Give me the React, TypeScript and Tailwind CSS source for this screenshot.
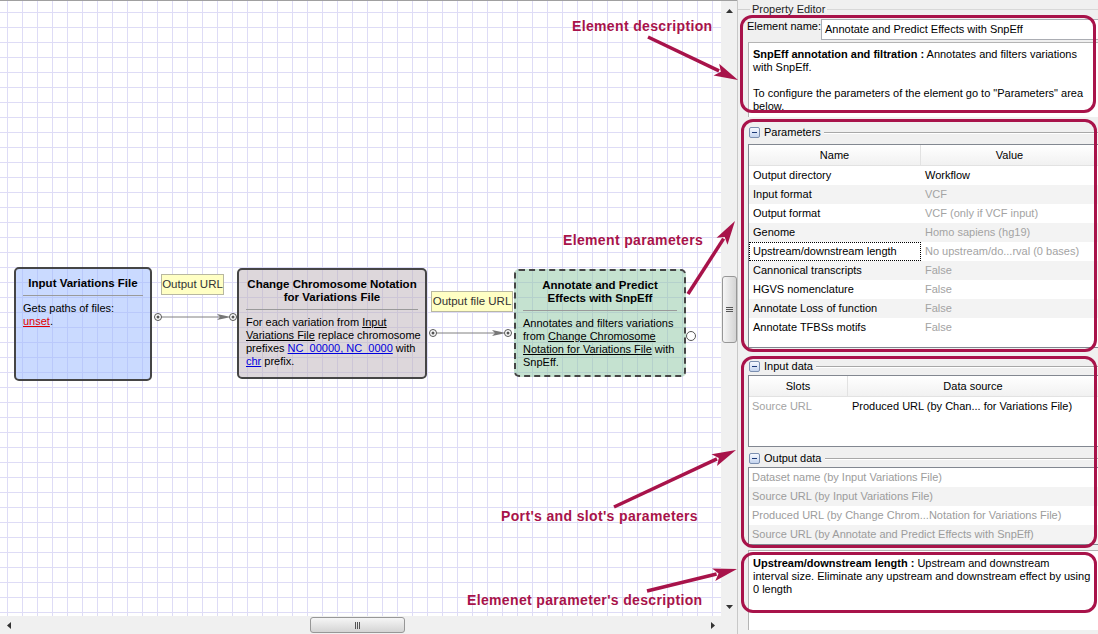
import React from "react";

const C = "#a8134a";

function Arrow({ x1, y1, x2, y2 }: { x1: number; y1: number; x2: number; y2: number }) {
  const dx = x2 - x1;
  const dy = y2 - y1;
  const L = Math.hypot(dx, dy);
  const ux = dx / L;
  const uy = dy / L;
  const hl = 24;
  const hw = 6.5;
  const bx = x2 - ux * hl;
  const by = y2 - uy * hl;
  const nx = -uy;
  const ny = ux;
  return (
    <g>
      <line x1={x1} y1={y1} x2={bx + ux * 3} y2={by + uy * 3} stroke={C} strokeWidth={3.5} />
      <polygon
        points={`${x2},${y2} ${bx + nx * hw},${by + ny * hw} ${bx + ux * 5},${by + uy * 5} ${bx - nx * hw},${by - ny * hw}`}
        fill={C}
      />
    </g>
  );
}

function MinusIcon() {
  return (
    <div className="w-[11px] h-[11px] border border-[#7b8fb0] rounded-[2px] bg-gradient-to-b from-[#f6f9ff] to-[#c5d4ee] flex items-center justify-center">
      <div className="w-[5px] h-px bg-[#1c3a78]" />
    </div>
  );
}

function GroupTitle({ label }: { label: string }) {
  return (
    <div className="flex items-center h-[13px] pl-[1px]">
      <MinusIcon />
      <span className="ml-[4px] mr-[3px] whitespace-nowrap">{label}</span>
      <div className="flex-1 h-[2px] border-t border-t-[#a8a8a8] border-b border-b-white" />
    </div>
  );
}

const params: [string, string, boolean?][] = [
  ["Output directory", "Workflow", true],
  ["Input format", "VCF"],
  ["Output format", "VCF (only if VCF input)"],
  ["Genome", "Homo sapiens (hg19)"],
  ["Upstream/downstream length", "No upstream/do...rval (0 bases)"],
  ["Cannonical transcripts", "False"],
  ["HGVS nomenclature", "False"],
  ["Annotate Loss of function", "False"],
  ["Annotate TFBSs motifs", "False"],
];

const outputs = [
  "Dataset name (by Input Variations File)",
  "Source URL (by Input Variations File)",
  "Produced URL (by Change Chrom...Notation for Variations File)",
  "Source URL (by Annotate and Predict Effects with SnpEff)",
];

function VScroll() {
  return (
    <div className="w-[16px] h-full bg-[#f0f0f0] border-t border-[#a0a0a0] flex flex-col items-center">
      <div className="h-[19px] w-full flex items-center justify-center">
        <svg width="7" height="4" viewBox="0 0 7 4">
          <polygon points="3.5,0 7,4 0,4" fill="#333" />
        </svg>
      </div>
      <div className="h-[256px]" />
      <div className="w-[15px] h-[67px] border border-[#979797] rounded-[3px] bg-gradient-to-r from-[#f6f6f6] to-[#d4d4d4] flex flex-col items-center justify-center gap-[1px]">
        <div className="w-[7px] h-px bg-[#555]" />
        <div className="w-[7px] h-px bg-[#555]" />
        <div className="w-[7px] h-px bg-[#555]" />
      </div>
      <div className="flex-1" />
      <div className="h-[18px] w-full flex items-center justify-center">
        <svg width="7" height="4" viewBox="0 0 7 4">
          <polygon points="0,0 7,0 3.5,4" fill="#333" />
        </svg>
      </div>
    </div>
  );
}

function HScroll() {
  return (
    <div className="w-[721px] h-full bg-[#f0f0f0] flex items-center">
      <div className="w-[17px] h-full flex items-center justify-center">
        <svg width="4" height="7" viewBox="0 0 4 7">
          <polygon points="0,3.5 4,0 4,7" fill="#333" />
        </svg>
      </div>
      <div className="w-[293px]" />
      <div className="w-[95px] h-[16px] border border-[#979797] rounded-[3px] bg-gradient-to-b from-[#f6f6f6] to-[#d4d4d4] flex items-center justify-center gap-[1px]">
        <div className="w-px h-[7px] bg-[#555]" />
        <div className="w-px h-[7px] bg-[#555]" />
        <div className="w-px h-[7px] bg-[#555]" />
      </div>
      <div className="flex-1" />
      <div className="w-[17px] h-full flex items-center justify-center">
        <svg width="4" height="7" viewBox="0 0 4 7">
          <polygon points="4,3.5 0,0 0,7" fill="#333" />
        </svg>
      </div>
    </div>
  );
}

function Port({ x, y, dot = true, r = 3.5 }: { x: number; y: number; dot?: boolean; r?: number }) {
  return (
    <g>
      <circle cx={x} cy={y} r={r} fill="white" stroke="#555" strokeWidth={1} />
      {dot && <circle cx={x} cy={y} r={1.5} fill="#555" />}
    </g>
  );
}

export default function App() {
  return (
    <div className="relative w-[1098px] h-[634px] overflow-hidden flex bg-[#f0f0f0] text-[11px] leading-[13px] text-black font-['Liberation_Sans',Arial,sans-serif]">
      {/* Left: canvas + scrollbars */}
      <div className="w-[737px] h-full flex flex-col">
        <div className="flex h-[616px]">
          <div className="relative w-[721px] h-full border-t border-[#a0a0a0] bg-white bg-[linear-gradient(to_right,#dedcf6_1px,transparent_1px),linear-gradient(to_bottom,#dedcf6_1px,transparent_1px)] bg-[size:15px_15px] bg-[position:7px_11px]">
            {/* Node 1 */}
            <div className="absolute left-[14px] top-[266px] w-[138px] h-[114px] border-2 border-[#454545] rounded-[5px] bg-[#95b5ff]/50 px-[7px] pt-[8px] whitespace-nowrap">
              <div className="font-bold text-center text-[11.5px] leading-[13px]">Input Variations File</div>
              <div className="mt-[5px] h-px bg-[#9a9a9a]" />
              <div className="pt-[6px]">
                Gets paths of files:
                <br />
                <span className="text-[#e00000] underline">unset</span>.
              </div>
            </div>
            {/* Node 2 */}
            <div className="absolute left-[237px] top-[267px] w-[190px] h-[111px] border-2 border-[#454545] rounded-[5px] bg-[#bcb0b8]/50 px-[7px] pt-[8px] whitespace-nowrap">
              <div className="font-bold text-center text-[11.5px] leading-[13px]">
                Change Chromosome Notation
                <br />
                for Variations File
              </div>
              <div className="mt-[5px] h-px bg-[#9a9a9a]" />
              <div className="pt-[6px]">
                For each variation from <span className="underline">Input</span>
                <br />
                <span className="underline">Variations File</span> replace chromosome
                <br />
                prefixes <span className="underline text-[#0000dd]">NC_00000, NC_0000</span> with
                <br />
                <span className="underline text-[#0000dd]">chr</span> prefix.
              </div>
            </div>
            {/* Node 3 */}
            <div className="absolute left-[514px] top-[268px] w-[172px] h-[108px] border-2 border-dashed border-[#454545] rounded-[5px] bg-[#8cc5a2]/50 px-[7px] pt-[8px] whitespace-nowrap">
              <div className="font-bold text-center text-[11.5px] leading-[13px]">
                Annotate and Predict
                <br />
                Effects with SnpEff
              </div>
              <div className="mt-[5px] h-px bg-[#9a9a9a]" />
              <div className="pt-[6px]">
                Annotates and filters variations
                <br />
                from <span className="underline">Change Chromosome</span>
                <br />
                <span className="underline">Notation for Variations File</span> with
                <br />
                SnpEff.
              </div>
            </div>
            {/* Port labels */}
            <div className="absolute left-[161px] top-[273px] w-[63px] h-[21px] bg-[#ffffc4] border border-[#b8b8a0] flex items-center justify-center text-[#333] text-[11.5px]">
              Output URL
            </div>
            <div className="absolute left-[431px] top-[290px] w-[82px] h-[21px] bg-[#ffffc4] border border-[#b8b8a0] flex items-center justify-center text-[#333] text-[11.5px] whitespace-nowrap">
              Output file URL
            </div>
            {/* Connections */}
            <svg className="absolute left-0 top-0" width="721" height="615">
              <line x1={161} y1={316} x2={222} y2={316} stroke="#808080" strokeWidth={1} />
              <polygon points="217,313 231,316 217,319 220,316" fill="#777" />
              <line x1={436} y1={332} x2={497} y2={332} stroke="#808080" strokeWidth={1} />
              <polygon points="492,329 506,332 492,335 495,332" fill="#777" />
              <Port x={158} y={316} />
              <Port x={233} y={316} />
              <Port x={433} y={332} />
              <Port x={508} y={332} />
              <Port x={691} y={335} dot={false} r={4.5} />
            </svg>
          </div>
          <VScroll />
        </div>
        <div className="flex h-[18px]">
          <HScroll />
          <div className="w-[16px] h-full bg-[#f0f0f0]" />
        </div>
      </div>

      {/* Right: Property editor */}
      <div className="w-[361px] h-full bg-[#f0f0f0] border-l border-[#c8c8c8]">
        <div className="flex items-center h-[19px]">
          <div className="w-[12px] h-px bg-[#d0d0d0]" />
          <span className="px-[2px] text-[#1e1e1e] whitespace-nowrap">Property Editor</span>
          <div className="flex-1 h-px bg-[#d8d8d8]" />
        </div>
        <div className="pl-[10px]">
          {/* Element name */}
          <div className="flex h-[21px]">
            <div className="w-[74px] pt-[1px] -ml-px whitespace-nowrap">Element name:</div>
            <div className="flex-1 h-[21px] bg-white border border-r-0 border-[#abadb3] pl-[3px] flex items-center whitespace-nowrap">
              Annotate and Predict Effects with SnpEff
            </div>
          </div>
          {/* Description */}
          <div className="mt-[2px] h-[75px] bg-white border-t border-l border-[#b4b4b4] pl-[4px] pt-[5px] whitespace-nowrap">
            <span className="font-bold">SnpEff annotation and filtration :</span> Annotates and filters variations
            <br />
            with SnpEff.
            <br />
            <br />
            To configure the parameters of the element go to "Parameters" area
            <br />
            below.
          </div>
          {/* Parameters */}
          <div className="mt-[9px]">
            <GroupTitle label="Parameters" />
          </div>
          <div className="mt-[5px] h-[204px] bg-white border-t border-l border-b border-[#828790]">
            <div className="flex h-[21px] bg-gradient-to-b from-white to-[#f1f1f1] border-b border-[#e2e2e2]">
              <div className="w-[172px] border-r border-[#e2e2e2] flex items-center justify-center">Name</div>
              <div className="flex-1 flex items-center justify-center">Value</div>
            </div>
            {params.map(([n, v, dark], i) => (
              <div key={n} className={`flex h-[19px] items-center whitespace-nowrap ${i % 2 === 1 ? "bg-[#f3f3f3]" : "bg-white"}`}>
                {i === 4 ? (
                  <div className="w-[172px] h-full pl-[3px] flex items-center border border-dotted border-black">{n}</div>
                ) : (
                  <div className="w-[172px] pl-[4px]">{n}</div>
                )}
                <div className={`pl-[4px] ${dark ? "text-black" : "text-[#a3a3a3]"}`}>{v}</div>
              </div>
            ))}
          </div>
          {/* Input data */}
          <div className="mt-[12px]">
            <GroupTitle label="Input data" />
          </div>
          <div className="mt-[2px] h-[72px] bg-white border-t border-l border-b border-[#828790]">
            <div className="flex h-[21px] bg-gradient-to-b from-white to-[#f1f1f1] border-b border-[#e2e2e2]">
              <div className="w-[99px] border-r border-[#e2e2e2] flex items-center justify-center">Slots</div>
              <div className="flex-1 flex items-center justify-center">Data source</div>
            </div>
            <div className="flex h-[19px] items-center whitespace-nowrap">
              <div className="w-[99px] pl-[3px] text-[#a3a3a3]">Source URL</div>
              <div className="pl-[4px]">Produced URL (by Chan... for Variations File)</div>
            </div>
          </div>
          {/* Output data */}
          <div className="mt-[5px]">
            <GroupTitle label="Output data" />
          </div>
          <div className="mt-[2px] h-[78px] bg-white border-t border-l border-b border-[#828790]">
            {outputs.map((o, i) => (
              <div key={o} className={`h-[19px] flex items-center pl-[3px] whitespace-nowrap text-[#9c9c9c] ${i % 2 === 1 ? "bg-[#f3f3f3]" : "bg-white"}`}>
                {o}
              </div>
            ))}
          </div>
          {/* Parameter description */}
          <div className="mt-[5px] h-[80px] bg-white border-t border-l border-[#b4b4b4] pl-[4px] pt-[6px] whitespace-nowrap">
            <span className="font-bold">Upstream/downstream length :</span> Upstream and downstream
            <br />
            interval size. Eliminate any upstream and downstream effect by using
            <br />0 length
          </div>
        </div>
      </div>

      {/* Annotation overlay */}
      <div className="absolute left-[740px] top-[15px] w-[356px] h-[98px] border-[3px] border-[#a8134a] rounded-[12px]" />
      <div className="absolute left-[741px] top-[119px] w-[356px] h-[233px] border-[3px] border-[#a8134a] rounded-[12px]" />
      <div className="absolute left-[741px] top-[356px] w-[356px] h-[192px] border-[3px] border-[#a8134a] rounded-[12px]" />
      <div className="absolute left-[741px] top-[552px] w-[356px] h-[61px] border-[3px] border-[#a8134a] rounded-[12px]" />

      <div className="absolute left-[572px] top-[18px] text-[14px] leading-[16px] font-bold tracking-[0.35px] text-[#a8134a] whitespace-nowrap font-['Liberation_Sans',Arial,sans-serif]">
        Element description
      </div>
      <div className="absolute left-[563px] top-[232px] text-[14px] leading-[16px] font-bold tracking-[0.35px] text-[#a8134a] whitespace-nowrap">
        Element parameters
      </div>
      <div className="absolute left-[501px] top-[508px] text-[14px] leading-[16px] font-bold tracking-[0.35px] text-[#a8134a] whitespace-nowrap">
        Port's and slot's parameters
      </div>
      <div className="absolute left-[467px] top-[592px] text-[14px] leading-[16px] font-bold tracking-[0.35px] text-[#a8134a] whitespace-nowrap">
        Elemenet parameter's description
      </div>

      <svg className="absolute left-0 top-0 pointer-events-none" width="1098" height="634">
        <Arrow x1={648} y1={37} x2={738} y2={80} />
        <Arrow x1={688} y1={294} x2={735} y2={221} />
        <Arrow x1={614} y1={507} x2={736} y2={450} />
        <Arrow x1={647} y1={591} x2={737} y2={569} />
      </svg>
    </div>
  );
}
